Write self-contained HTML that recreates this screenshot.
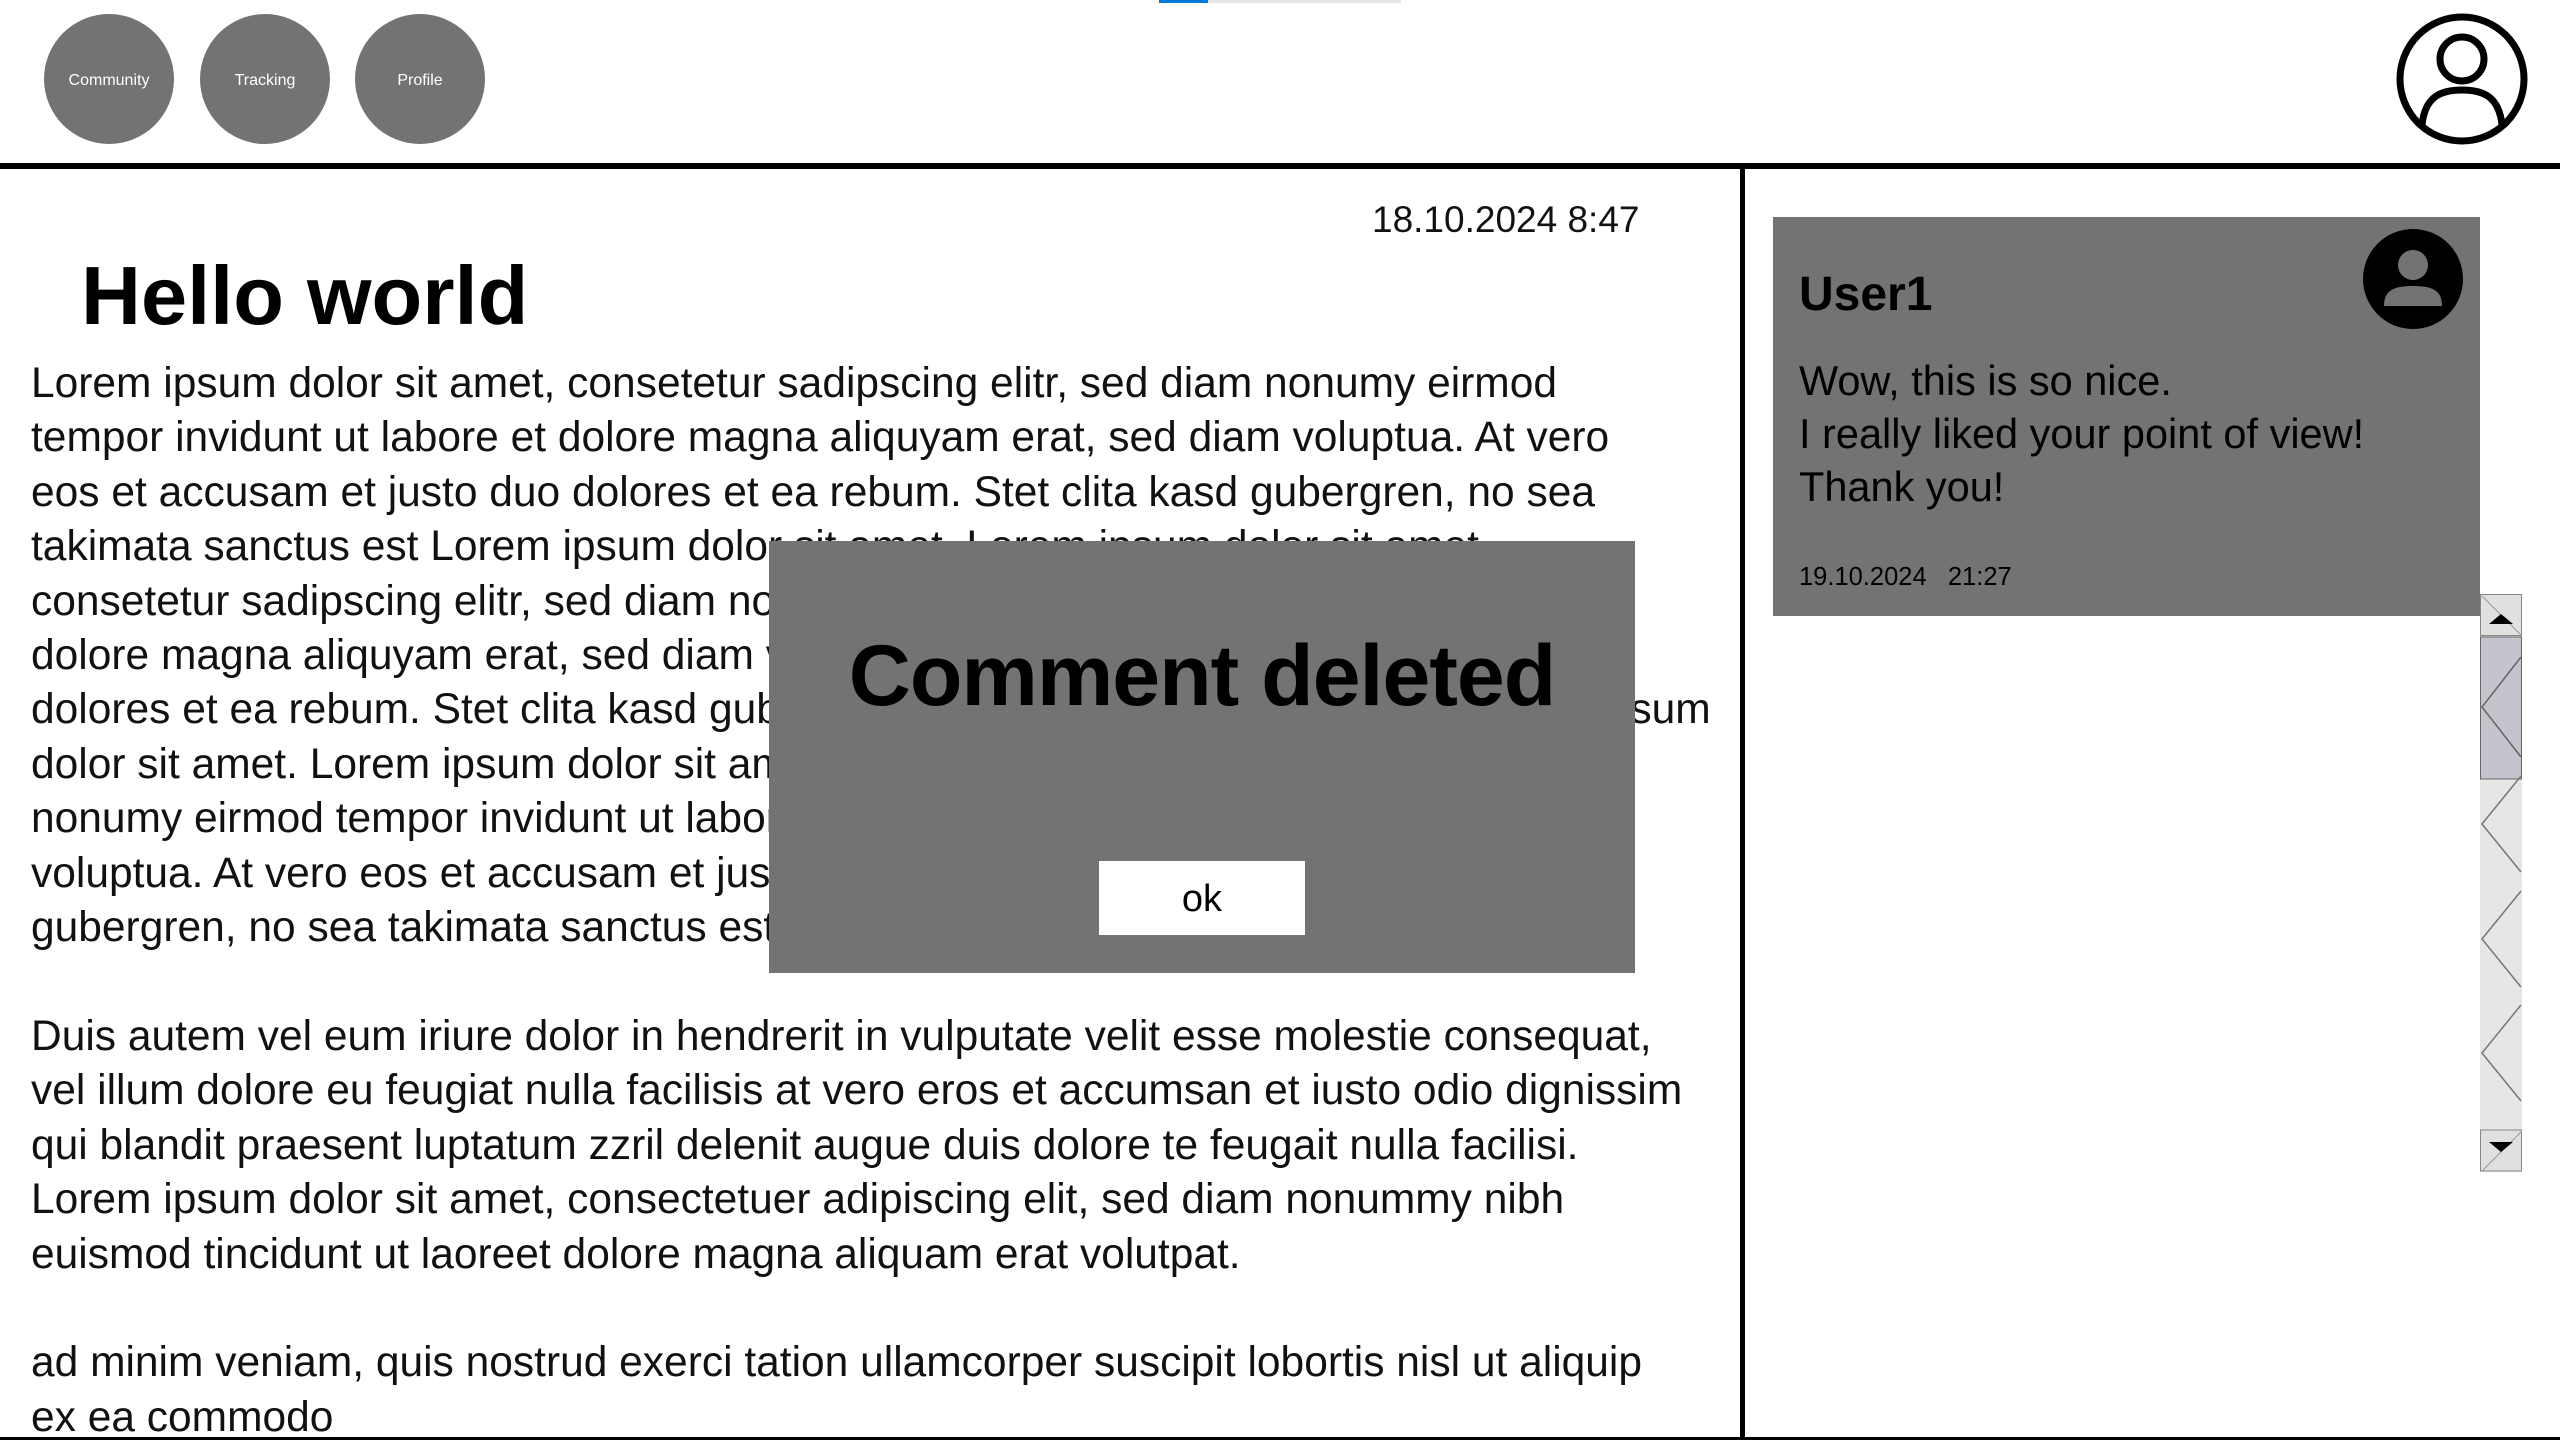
<!DOCTYPE html>
<html><head><meta charset="utf-8"><style>
*{margin:0;padding:0;box-sizing:border-box}
body{width:2560px;height:1440px;background:#fff;position:relative;overflow:hidden;font-family:"Liberation Sans",sans-serif;color:#111}
.nav{position:absolute;top:14px;width:130px;height:130px;border-radius:50%;background:#737373;color:#fff;font-size:16px;display:flex;align-items:center;justify-content:center;padding-top:3px}
.hl{position:absolute;left:0;top:163px;width:2560px;height:6px;background:#000}
.vl{position:absolute;left:1740px;top:166px;width:5px;height:1274px;background:#000}
.bl{position:absolute;left:0;top:1437px;width:2560px;height:3px;background:#000}
.date{position:absolute;left:1372px;top:199px;font-size:37px}
h1{position:absolute;left:81px;top:248px;font-size:83px;font-weight:bold;color:#000}
.body{position:absolute;left:31px;top:357px;font-size:42.5px;line-height:54.4px;white-space:nowrap;color:#111}
.modal{position:absolute;left:769px;top:541px;width:866px;height:432px;background:#737373}
.modal .t{position:absolute;left:0;width:100%;top:86px;text-align:center;font-size:86px;font-weight:bold;color:#000;letter-spacing:-1px}
.ok{position:absolute;left:330px;top:320px;width:206px;height:74px;background:#fff;font-size:38px;text-align:center;line-height:76px;color:#000}
.card{position:absolute;left:1773px;top:217px;width:707px;height:399px;background:#737373;color:#000}
.card .u{position:absolute;left:26px;top:50px;font-size:48px;font-weight:bold}
.card .m{position:absolute;left:26px;top:137px;font-size:41.5px;line-height:53px}
.card .d{position:absolute;left:26px;top:346px;font-size:25.5px}
</style></head><body>
<div style="position:absolute;left:1159px;top:0;width:242px;height:3px;background:#e6e6e6"></div>
<div style="position:absolute;left:1159px;top:0;width:49px;height:3px;background:#0078d7"></div>
<div class="nav" style="left:44px">Community</div>
<div class="nav" style="left:200px">Tracking</div>
<div class="nav" style="left:355px">Profile</div>
<svg style="position:absolute;left:2395px;top:12px" width="134" height="134" viewBox="0 0 134 134">
<circle cx="67" cy="67" r="62" fill="none" stroke="#000" stroke-width="7"/>
<circle cx="67" cy="47" r="22" fill="none" stroke="#000" stroke-width="7"/>
<path d="M27 113 C30 85 45 78 67 78 C89 78 104 85 107 113" fill="none" stroke="#000" stroke-width="7"/>
</svg>
<div class="hl"></div><div class="vl"></div><div class="bl"></div>
<div class="date">18.10.2024 8:47</div>
<h1>Hello world</h1>
<div class="body">Lorem ipsum dolor sit amet, consetetur sadipscing elitr, sed diam nonumy eirmod<br>tempor invidunt ut labore et dolore magna aliquyam erat, sed diam voluptua. At vero<br>eos et accusam et justo duo dolores et ea rebum. Stet clita kasd gubergren, no sea<br>takimata sanctus est Lorem ipsum dolor sit amet. Lorem ipsum dolor sit amet,<br>consetetur sadipscing elitr, sed diam nonumy eirmod tempor invidunt ut labore et<br>dolore magna aliquyam erat, sed diam voluptua. At vero eos et accusam et justo duo<br>dolores et ea rebum. Stet clita kasd gubergren, no sea takimata sanctus est Lorem ipsum<br>dolor sit amet. Lorem ipsum dolor sit amet, consetetur sadipscing elitr, sed diam<br>nonumy eirmod tempor invidunt ut labore et dolore magna aliquyam erat, sed diam<br>voluptua. At vero eos et accusam et justo duo dolores et ea rebum. Stet clita kasd<br>gubergren, no sea takimata sanctus est Lorem ipsum dolor sit amet.<br><br>Duis autem vel eum iriure dolor in hendrerit in vulputate velit esse molestie consequat,<br>vel illum dolore eu feugiat nulla facilisis at vero eros et accumsan et iusto odio dignissim<br>qui blandit praesent luptatum zzril delenit augue duis dolore te feugait nulla facilisi.<br>Lorem ipsum dolor sit amet, consectetuer adipiscing elit, sed diam nonummy nibh<br>euismod tincidunt ut laoreet dolore magna aliquam erat volutpat.<br><br>ad minim veniam, quis nostrud exerci tation ullamcorper suscipit lobortis nisl ut aliquip<br>ex ea commodo</div>
<div class="modal"><div class="t">Comment deleted</div><div class="ok">ok</div></div>
<div class="card">
<div class="u">User1</div>
<div class="m">Wow, this is so nice.<br>I really liked your point of view!<br>Thank you!</div>
<div class="d">19.10.2024&nbsp;&nbsp;&nbsp;21:27</div>
<svg style="position:absolute;left:589px;top:11px" width="102" height="102" viewBox="0 0 102 102">
<circle cx="51" cy="51" r="50" fill="#000"/>
<circle cx="51" cy="37" r="15" fill="#737373"/>
<path d="M22 78 C22 62 32 58 51 58 C70 58 80 62 80 78 Z" fill="#737373"/>
</svg>
</div>
<svg style="position:absolute;left:2480px;top:594px" width="44" height="580" viewBox="0 0 44 580">
<rect x="0" y="0" width="42" height="578" fill="#e6e6e6"/>
<rect x="0.5" y="0.5" width="41" height="41" fill="#e0e0e0" stroke="#888"/>
<path d="M2 2 L41 41" stroke="#999" stroke-width="1"/>
<path d="M9 30 L21 20 L33 30 Z" fill="#000"/>
<rect x="0.5" y="43" width="41" height="142" fill="#c4c4cc" stroke="#666"/>
<path d="M41 63 L2 113 L41 163" fill="none" stroke="#666" stroke-width="1.5"/>
<path d="M41 182 L2 230 L41 278 M41 297 L2 345 L41 393 M41 411 L2 459 L41 507" fill="none" stroke="#777" stroke-width="1.5"/>
<rect x="0.5" y="536" width="41" height="41" fill="#e0e0e0" stroke="#888"/>
<path d="M2 577 L41 538" stroke="#999" stroke-width="1"/>
<path d="M9 548 L21 558 L33 548 Z" fill="#000"/>
</svg>
</body></html>
